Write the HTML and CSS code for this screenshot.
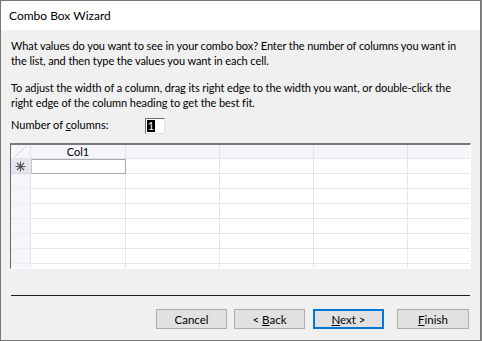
FILE: index.html
```html
<!DOCTYPE html>
<html lang="en">
<head>
  <meta charset="UTF-8">
  <title>Combo Box Wizard</title>
  <link rel="stylesheet" href="styles.css">
</head>
<body>

  <div class="window">
    <div class="titlebar">Combo Box Wizard</div>

    <div class="content">
      <p class="intro">What values do you want to see in your combo box? Enter the number of columns you want in<br>the list, and then type the values you want in each cell.</p>
      <p class="intro second">To adjust the width of a column, drag its right edge to the width you want, or double-click the<br>right edge of the column heading to get the best fit.</p>

      <div class="columns-row">
        <label for="numcols">Number of <u>c</u>olumns:</label>
        <div class="num-box" id="numcols"><span class="sel">1</span></div>
      </div>

      <div class="grid">
        <table>
          <colgroup>
            <col class="c-sel">
            <col class="c-first">
            <col class="c-norm">
            <col class="c-norm">
            <col class="c-norm">
            <col class="c-norm">
          </colgroup>
          <tr class="head">
            <th class="corner">
              <svg width="19" height="13" viewBox="0 0 19 13"><path d="M4 12 L15 1" stroke="#d3d6dc" stroke-width="1"/></svg>
            </th>
            <th class="col1">Col1</th>
            <th></th><th></th><th></th><th></th>
          </tr>
          <tr class="new">
            <td class="rsel">
              <svg width="11" height="11" viewBox="0 0 11 11">
                <path d="M5.5 0.5 V10.5 M0.5 5.5 H10.5 M2 2 L9 9 M9 2 L2 9" stroke="#555" stroke-width="1.1"/>
              </svg>
            </td>
            <td class="active"></td>
            <td></td><td></td><td></td><td></td>
          </tr>
          <tr><td class="rsel"></td><td></td><td></td><td></td><td></td><td></td></tr>
          <tr><td class="rsel"></td><td></td><td></td><td></td><td></td><td></td></tr>
          <tr><td class="rsel"></td><td></td><td></td><td></td><td></td><td></td></tr>
          <tr><td class="rsel"></td><td></td><td></td><td></td><td></td><td></td></tr>
          <tr><td class="rsel"></td><td></td><td></td><td></td><td></td><td></td></tr>
          <tr><td class="rsel"></td><td></td><td></td><td></td><td></td><td></td></tr>
          <tr><td class="rsel"></td><td></td><td></td><td></td><td></td><td></td></tr>
        </table>
      </div>

      <div class="separator"></div>

      <div class="buttons">
        <button type="button" class="btn">Cancel</button>
        <button type="button" class="btn back">&lt; <u>B</u>ack</button>
        <button type="button" class="btn next"><u>N</u>ext &gt;</button>
        <button type="button" class="btn finish"><u>F</u>inish</button>
      </div>
    </div>
  </div>

</body>
</html>
```

FILE: styles.css
```css
body {
  margin: 0;
  background-color: #8a8a8a;
  font-family: Lato, "Noto Sans", Arial, sans-serif;
  font-size: 11px;
  color: #000;
}
.window {
  width: 481px;
  height: 341px;
  box-sizing: border-box;
  border: 1px solid #767676;
  background-color: #f0f0f0;
  overflow: hidden;
}
.titlebar {
  height: 29px;
  line-height: 29px;
  padding-left: 8px;
  background-color: #fff;
  font-size: 12px;
}
.content {
  padding: 8px 9px 0 10px;
}
.intro {
  margin: 0;
  line-height: 15px;
  white-space: nowrap;
  letter-spacing: -0.08px;
}
.intro.second {
  margin-top: 12px;
}
.columns-row {
  display: flex;
  height: 17px;
  margin-top: 7px;
  line-height: 15px;
}
.columns-row label {
  width: 134px;
}
.num-box {
  width: 20px;
  height: 16px;
  margin-top: 1px;
  box-sizing: border-box;
  background-color: #fff;
  border-top: 1px solid #6b6b6b;
  border-left: 1px solid #6b6b6b;
  border-right: 1px solid #e3e3e3;
  border-bottom: 1px solid #e3e3e3;
  padding: 1px 0 0 1px;
}
.num-box .sel {
  display: block;
  width: 8px;
  height: 12px;
  line-height: 12px;
  background-color: #000;
  color: #fff;
  text-align: center;
  font-size: 11px;
}
.grid {
  width: 461px;
  height: 126px;
  box-sizing: border-box;
  margin-top: 9px;
  margin-left: -1px;
  border-top: 2px solid #7a7a7a;
  border-left: 1px solid #6a6a6a;
  border-right: 1px solid #fff;
  border-bottom: 1px solid #fff;
  background-color: #fff;
  overflow: hidden;
}
.grid table {
  border-collapse: separate;
  border-spacing: 0;
  table-layout: fixed;
  width: 491px;
}
.c-sel { width: 20px; }
.c-first { width: 95px; }
.c-norm { width: 94px; }
.grid th, .grid td {
  padding: 0;
  border-right: 1px solid #e6e6e6;
  border-bottom: 1px solid #e6e6e6;
  height: 15px;
  box-sizing: border-box;
}
.grid tr.head th {
  height: 14px;
  background-color: #f4f6fb;
  font-weight: normal;
  line-height: 13px;
  border-right-color: #e2e5ec;
  border-bottom-color: #e2e5ec;
}
.grid th.corner {
  background-color: #eceef3;
  vertical-align: top;
}
.grid th.corner svg {
  display: block;
}
.grid th.col1 {
  background-color: #e3e6ed;
  border-right-color: #c9ccd3;
  text-align: center;
}
.grid td.rsel {
  background-color: #f4f6fb;
  border-right-color: #e2e5ec;
  border-bottom-color: #eaedf3;
}
.grid tr.new td.rsel {
  background-color: #e3e6ed;
  border-bottom-color: #d5d8df;
  text-align: center;
}
.grid tr.new td.rsel svg {
  display: block;
  margin: 1px auto 0;
}
.grid td.active {
  border: 1px solid #a9a9a9;
  border-left-color: #c6c6c6;
}
.separator {
  height: 1px;
  margin-top: 26px;
  margin-right: 1px;
  background-color: #1e1e1e;
}
.buttons {
  display: flex;
  justify-content: flex-end;
  margin-top: 13px;
  padding-right: 2px;
}
.btn {
  width: 71px;
  height: 20px;
  box-sizing: border-box;
  padding: 0;
  margin-left: 7px;
  font-family: Lato, "Noto Sans", Arial, sans-serif;
  font-size: 11.5px;
  color: #000;
  background-color: #e1e1e1;
  border: 1px solid #adadad;
  border-radius: 0;
}
.btn.next {
  margin-left: 8px;
  border: 2px solid #0078d7;
}
.btn.finish {
  width: 72px;
  margin-left: 13px;
}
```
